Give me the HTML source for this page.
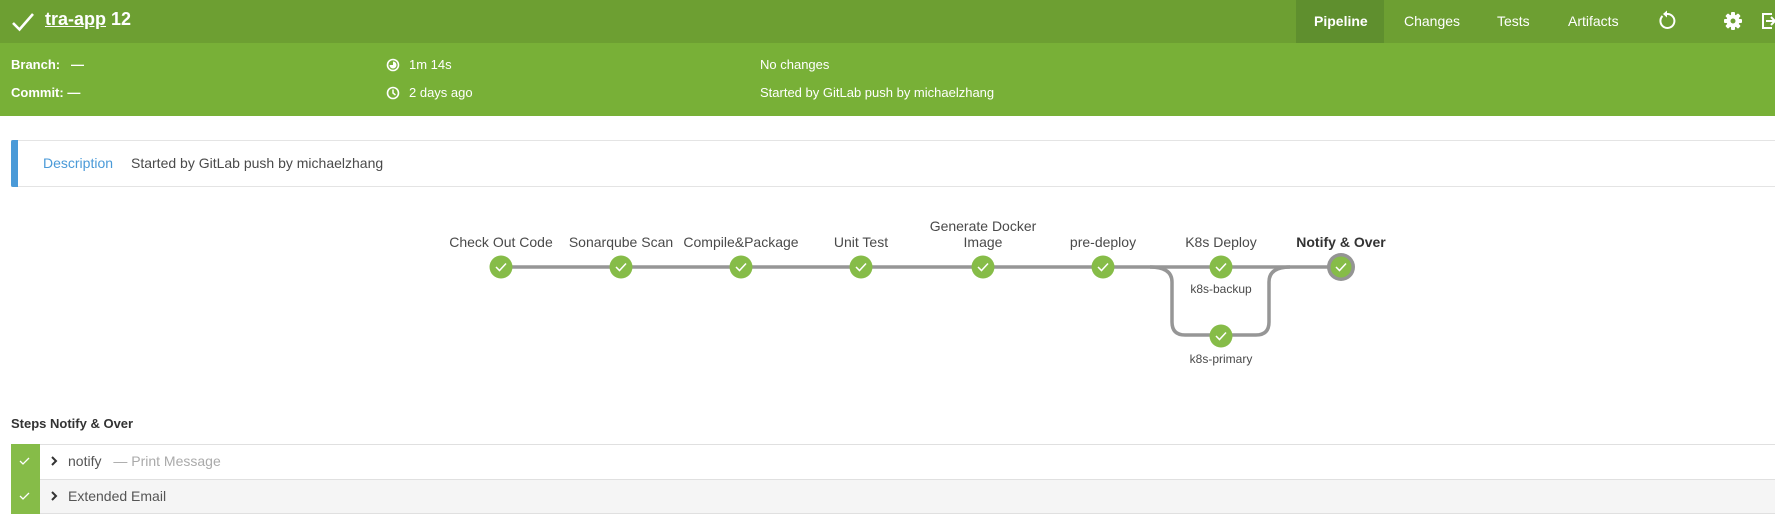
<!DOCTYPE html>
<html><head><style>
*{margin:0;padding:0;box-sizing:border-box}
body{width:1775px;height:528px;background:#fff;font-family:"Liberation Sans",sans-serif;position:relative;overflow:hidden;color:#4a4a4a}
.a{position:absolute;white-space:nowrap}
#top{position:absolute;left:0;top:0;width:1775px;height:43px;background:#6d9f32}
#info{position:absolute;left:0;top:43px;width:1775px;height:73px;background:#78b037}
.w{color:#fff;font-size:13px;font-weight:bold}
.nav{color:#fff;font-size:14px;top:13px}
.lbl{font-size:14px;color:#4a4a4a;text-align:center}
</style></head><body>
<div id="top"></div>
<div id="info"></div>
<svg class="a" style="left:11px;top:10px" width="24" height="24" viewBox="0 0 24 24"><path d="M2 13 L8.5 19.5 L22 4" stroke="#fff" stroke-width="2.6" fill="none"/></svg>
<div class="a" style="left:45px;top:9px;color:#fff;font-size:18px;font-weight:bold"><span style="text-decoration:underline">tra-app</span> 12</div>
<div class="a" style="left:1296px;top:0;width:88px;height:43px;background:#5f8f2e"></div>
<div class="a nav" style="left:1314px;font-weight:bold">Pipeline</div>
<div class="a nav" style="left:1404px">Changes</div>
<div class="a nav" style="left:1497px">Tests</div>
<div class="a nav" style="left:1568px">Artifacts</div>
<svg class="a" style="left:1656px;top:10px" width="22" height="22" viewBox="0 0 22 22"><path d="M6.5 6 A7 7 0 1 0 11 4" stroke="#fff" stroke-width="2" fill="none"/><path d="M11 0.5 L11 7.5 L7 4 Z" fill="#fff"/></svg>
<svg class="a" style="left:1722px;top:10px" width="22" height="22" viewBox="0 0 22 22"><g fill="#fff"><rect x="9" y="2" width="4" height="18" rx="1"/><rect x="9" y="2" width="4" height="18" rx="1" transform="rotate(45 11 11)"/><rect x="9" y="2" width="4" height="18" rx="1" transform="rotate(90 11 11)"/><rect x="9" y="2" width="4" height="18" rx="1" transform="rotate(135 11 11)"/><circle cx="11" cy="11" r="6.5"/></g><circle cx="11" cy="11" r="2.5" fill="#6d9f32"/></svg>
<svg class="a" style="left:1760px;top:10px" width="15" height="22" viewBox="0 0 15 22"><path d="M12 4 H3 V18 H12" stroke="#fff" stroke-width="2" fill="none"/><path d="M6 11 H15 M11 7 L15 11 L11 15" stroke="#fff" stroke-width="2" fill="none"/></svg>

<div class="a w" style="left:11px;top:57px">Branch:&nbsp;&nbsp; —</div>
<div class="a w" style="left:11px;top:85px">Commit: —</div>
<svg class="a" style="left:386px;top:58px" width="14" height="14" viewBox="0 0 14 14"><circle cx="7" cy="7" r="5.5" stroke="#fff" stroke-width="1.6" fill="none"/><path d="M7 7 V3.5 A3.5 3.5 0 1 1 3.5 7 Z" fill="#fff"/></svg>
<div class="a w" style="left:409px;top:57px;font-weight:normal">1m 14s</div>
<svg class="a" style="left:386px;top:86px" width="14" height="14" viewBox="0 0 14 14"><circle cx="7" cy="7" r="5.5" stroke="#fff" stroke-width="1.6" fill="none"/><path d="M7 3.5 V7 L9.5 9" stroke="#fff" stroke-width="1.5" fill="none"/></svg>
<div class="a w" style="left:409px;top:85px;font-weight:normal">2 days ago</div>
<div class="a w" style="left:760px;top:57px;font-weight:normal">No changes</div>
<div class="a w" style="left:760px;top:85px;font-weight:normal">Started by GitLab push by michaelzhang</div>

<div class="a" style="left:11px;top:140px;width:1764px;height:47px;border-top:1px solid #e4e4e4;border-bottom:1px solid #e4e4e4"></div>
<div class="a" style="left:11px;top:140px;width:7px;height:47px;background:#4a9ad8;border-radius:2px 0 0 2px"></div>
<div class="a" style="left:43px;top:155px;font-size:14px;color:#4a9ad8">Description</div>
<div class="a" style="left:131px;top:155px;font-size:14px;color:#4a4a4a">Started by GitLab push by michaelzhang</div>

<svg class="a" style="left:0;top:0" width="1775" height="528">
<g stroke="#969696" stroke-width="3.5" fill="none">
<path d="M501 267 H1341"/>
<path d="M1150 267 Q1172 267 1172 282 V322 Q1172 335 1185 335 H1256 Q1269 335 1269 322 V282 Q1269 267 1290 267"/>
</g>
<circle cx="1341" cy="267" r="14" fill="#949494"/>
<g fill="#86bc48">
<circle cx="501" cy="267" r="11.5"/><circle cx="621" cy="267" r="11.5"/><circle cx="741" cy="267" r="11.5"/><circle cx="861" cy="267" r="11.5"/><circle cx="983" cy="267" r="11.5"/><circle cx="1103" cy="267" r="11.5"/><circle cx="1221" cy="267" r="11.5"/><circle cx="1221" cy="336" r="11.5"/><circle cx="1341" cy="267" r="10.5"/>
</g>
<g stroke="#fff" stroke-width="1.5" fill="none">
<path d="M496 267 l3.5 3.5 l6.5 -7"/><path d="M616 267 l3.5 3.5 l6.5 -7"/><path d="M736 267 l3.5 3.5 l6.5 -7"/><path d="M856 267 l3.5 3.5 l6.5 -7"/><path d="M978 267 l3.5 3.5 l6.5 -7"/><path d="M1098 267 l3.5 3.5 l6.5 -7"/><path d="M1216 267 l3.5 3.5 l6.5 -7"/><path d="M1216 336 l3.5 3.5 l6.5 -7"/><path d="M1336 267 l3.5 3.5 l6.5 -7"/>
</g>
</svg>
<div class="a lbl" style="left:401px;top:234px;width:200px">Check Out Code</div>
<div class="a lbl" style="left:521px;top:234px;width:200px">Sonarqube Scan</div>
<div class="a lbl" style="left:641px;top:234px;width:200px">Compile&amp;Package</div>
<div class="a lbl" style="left:761px;top:234px;width:200px">Unit Test</div>
<div class="a lbl" style="left:883px;top:218px;width:200px;line-height:16px">Generate Docker<br>Image</div>
<div class="a lbl" style="left:1003px;top:234px;width:200px">pre-deploy</div>
<div class="a lbl" style="left:1121px;top:234px;width:200px">K8s Deploy</div>
<div class="a lbl" style="left:1241px;top:234px;width:200px;font-weight:bold;color:#333">Notify &amp; Over</div>
<div class="a lbl" style="left:1121px;top:282px;width:200px;font-size:12px">k8s-backup</div>
<div class="a lbl" style="left:1121px;top:352px;width:200px;font-size:12px">k8s-primary</div>

<div class="a" style="left:11px;top:416px;font-size:13px;font-weight:bold;color:#333">Steps Notify &amp; Over</div>
<div class="a" style="left:11px;top:444px;width:1764px;height:35px;border-top:1px solid #e0e0e0;background:#fff"></div>
<div class="a" style="left:11px;top:479px;width:1764px;height:35px;border-top:1px solid #e0e0e0;border-bottom:1px solid #e0e0e0;background:#f5f5f5"></div>
<div class="a" style="left:11px;top:444px;width:29px;height:70px;background:#86bc48"></div>
<svg class="a" style="left:11px;top:444px" width="29" height="70"><g stroke="#fff" stroke-width="1.3" fill="none"><path d="M9 17 l3 3 l6 -6"/><path d="M9 52 l3 3 l6 -6"/></g></svg>
<svg class="a" style="left:50px;top:455px" width="10" height="50"><g stroke="#333" stroke-width="2" fill="none"><path d="M2 2 l4 4 l-4 4"/><path d="M2 37 l4 4 l-4 4"/></g></svg>
<div class="a" style="left:68px;top:453px;font-size:14px;color:#555">notify <span style="color:#aaa;margin-left:8px">— Print Message</span></div>
<div class="a" style="left:68px;top:488px;font-size:14px;color:#555">Extended Email</div>
</body></html>
